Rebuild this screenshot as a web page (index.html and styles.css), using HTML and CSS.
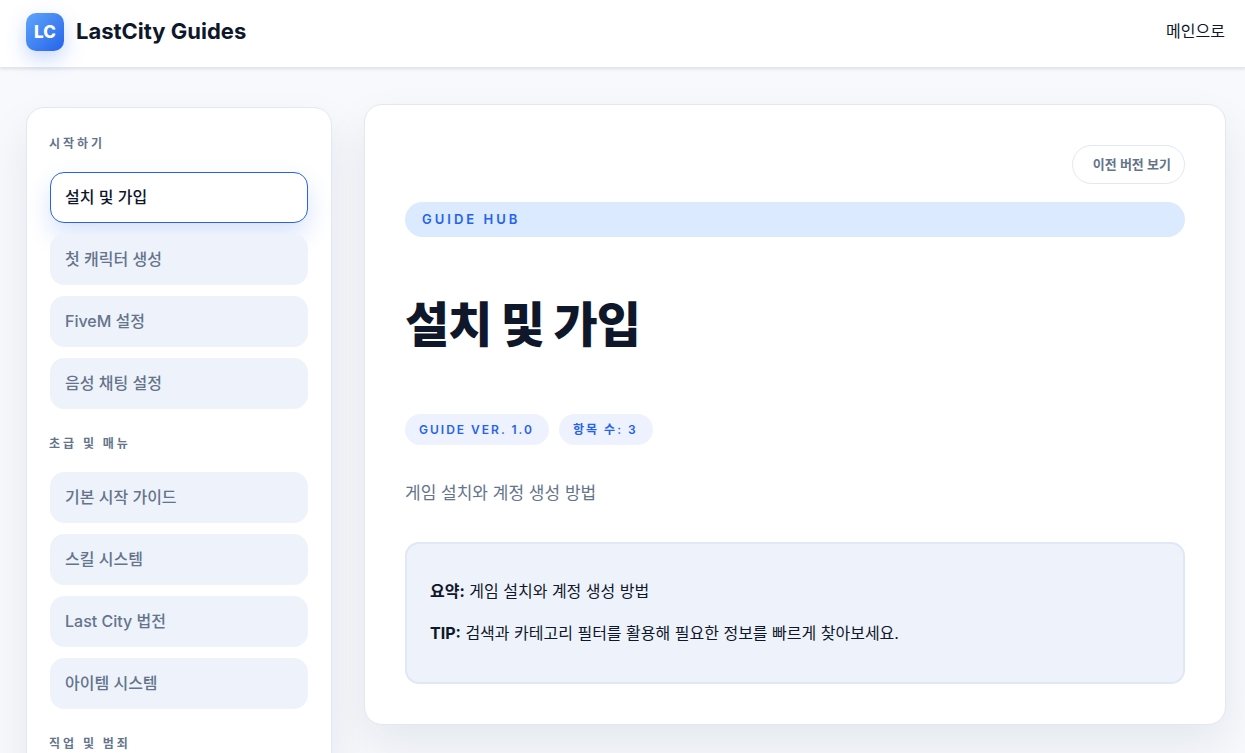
FILE: index.html
```html
<!DOCTYPE html>
<html lang="ko">
	<head>
		<meta charset="UTF-8" />
		<meta name="viewport" content="width=device-width, initial-scale=1.0" />
		<title>LastCity Guides</title>
		<link rel="stylesheet" href="styles.css">
	</head>
	<body>
		<header class="site-header">
			<a class="brand" href="#">
				<span class="brand-mark">LC</span>
				<span class="brand-name">LastCity Guides</span>
			</a>
			<a class="home-link" href="#">메인으로</a>
		</header>

		<div class="layout">
			<nav class="sidebar">
				<h2 class="nav-title">시작하기</h2>
				<ul class="nav-list">
					<li><a class="nav-item active" href="#">설치 및 가입</a></li>
					<li><a class="nav-item" href="#">첫 캐릭터 생성</a></li>
					<li><a class="nav-item" href="#">FiveM 설정</a></li>
					<li><a class="nav-item" href="#">음성 채팅 설정</a></li>
				</ul>
				<h2 class="nav-title">초급 및 매뉴</h2>
				<ul class="nav-list">
					<li><a class="nav-item" href="#">기본 시작 가이드</a></li>
					<li><a class="nav-item" href="#">스킬 시스템</a></li>
					<li><a class="nav-item" href="#">Last City 법전</a></li>
					<li><a class="nav-item" href="#">아이템 시스템</a></li>
				</ul>
				<h2 class="nav-title">직업 및 범죄</h2>
			</nav>

			<main class="guide">
				<button class="version-btn" type="button">이전 버전 보기</button>
				<div class="eyebrow">GUIDE HUB</div>
				<h1 class="guide-title">설치 및 가입</h1>
				<div class="badges">
					<span class="badge">GUIDE VER. 1.0</span>
					<span class="badge">항목 수: 3</span>
				</div>
				<p class="lead">게임 설치와 계정 생성 방법</p>
				<section class="summary">
					<p><strong>요약:</strong> 게임 설치와 계정 생성 방법</p>
					<p><strong>TIP:</strong> 검색과 카테고리 필터를 활용해 필요한 정보를 빠르게 찾아보세요.</p>
				</section>
			</main>
		</div>
	</body>
</html>
```

FILE: styles.css
```css
* {
	box-sizing: border-box;
}

body {
	min-height: 100vh;
	margin: 0;
	color: #0f172a;
	background: #f7f9fd;
	font-family: Inter, 'Noto Sans CJK KR', sans-serif;
	font-size: 16px;
	line-height: 24px;
}

a {
	color: inherit;
	text-decoration: none;
}

.site-header {
	display: flex;
	align-items: center;
	justify-content: space-between;
	padding: 13px 20px 16px 26px;
	background: #fff;
	border-bottom: 1px solid #e2e8f0;
	box-shadow: 0 1px 3px rgba(15, 23, 42, 0.12);
}

.brand {
	display: flex;
	align-items: center;
	gap: 12px;
}

.brand-mark {
	display: flex;
	align-items: center;
	justify-content: center;
	width: 38px;
	height: 38px;
	padding-bottom: 1px;
	border-radius: 10px;
	color: #fff;
	background: linear-gradient(135deg, #60a5fa, #2563eb);
	box-shadow: 0 8px 20px rgba(37, 99, 235, 0.25);
	font-size: 17px;
	font-weight: 800;
}

.brand-name {
	padding-bottom: 2px;
	font-size: 22px;
	font-weight: 700;
}

.home-link {
	padding-bottom: 2px;
}

.layout {
	display: grid;
	grid-template-columns: 306px 1fr;
	align-items: start;
	gap: 32px;
	padding: 36px 19px 0 26px;
}

.sidebar,
.guide {
	background: #fff;
	border: 1px solid #e2e8f0;
	border-radius: 18px;
	box-shadow: 0 20px 45px rgba(15, 23, 42, 0.08);
}

.sidebar {
	margin-top: 3px;
	padding: 24px 22px;
}

.nav-title {
	margin: 0 0 16px;
	color: #64748b;
	font-size: 12px;
	font-weight: 700;
	letter-spacing: 3px;
	line-height: 24px;
}

.nav-list {
	display: flex;
	flex-direction: column;
	gap: 11px;
	margin: 0 1px 23px;
	padding: 0;
	list-style: none;
}

.nav-item {
	display: block;
	padding: 12px 14px 13px;
	border: 1px solid #eef2fb;
	border-radius: 14px;
	color: #64748b;
	background: #eef2fb;
	font-weight: 500;
}

.nav-item.active {
	color: #0f172a;
	background: #fff;
	border-color: #2563eb;
	box-shadow: 0 12px 24px rgba(37, 99, 235, 0.18);
}

.guide {
	display: flex;
	flex-direction: column;
	padding: 40px;
}

.version-btn {
	align-self: flex-end;
	margin-bottom: 18px;
	padding: 9px 13px 9px 20px;
	border: 1px solid #e2e8f0;
	border-radius: 20px;
	color: #64748b;
	background: #fff;
	font-family: inherit;
	font-size: 13px;
	font-weight: 600;
	line-height: 19px;
}

.eyebrow {
	padding: 8px 17px;
	border-radius: 18px;
	color: #2563eb;
	background: #dbeafe;
	font-size: 13px;
	font-weight: 600;
	letter-spacing: 3px;
	line-height: 19px;
}

.guide-title {
	margin: 56px 0 57px;
	font-size: 48px;
	font-weight: 800;
	letter-spacing: -1px;
	line-height: 64px;
}

.badges {
	display: flex;
	gap: 10px;
}

.badge {
	padding: 6px 15px 6px 14px;
	border-radius: 16px;
	color: #2563eb;
	background: #eef2ff;
	font-size: 12px;
	font-weight: 600;
	letter-spacing: 2px;
	line-height: 19px;
}

.lead {
	margin: 34px 0 35px;
	color: #64748b;
	font-size: 17px;
	line-height: 28px;
}

.summary {
	padding: 34px 23px 36px;
	border: 2px solid #e0e7f5;
	border-radius: 14px;
	background: #eef2fb;
}

.summary p {
	margin: 0 0 16px;
	line-height: 26px;
}

.summary p:last-child {
	margin: 0;
}
```
